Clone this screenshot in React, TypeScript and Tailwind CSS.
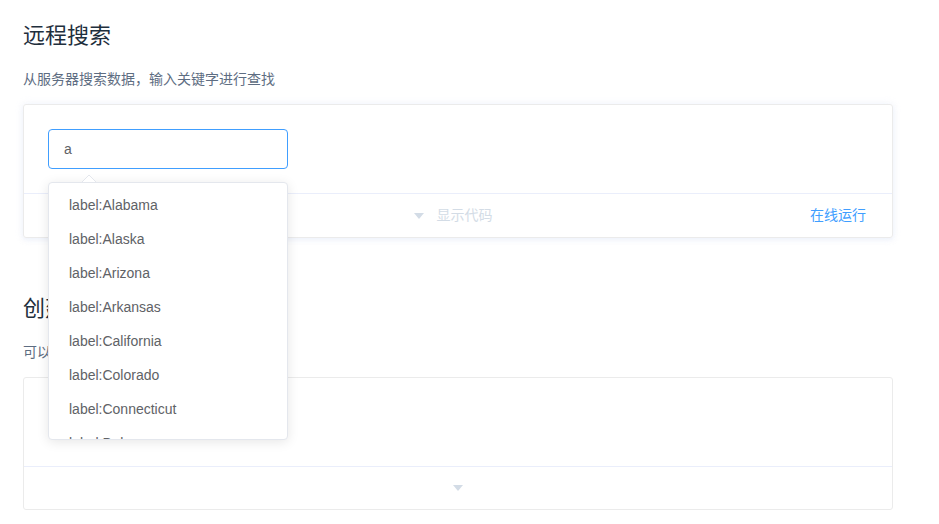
import React from "react";

const font = {
  fontFamily:
    '"Liberation Sans", Arial, "Noto Sans CJK SC", sans-serif',
};

const items = [
  "label:Alabama",
  "label:Alaska",
  "label:Arizona",
  "label:Arkansas",
  "label:California",
  "label:Colorado",
  "label:Connecticut",
  "label:Delaware",
  "label:Florida",
];

function Caret({ className }: { className?: string }) {
  return (
    <svg width="10" height="6" viewBox="0 0 10 6" className={className}>
      <polygon points="0,0 10,0 5,6" fill="#d3dce6" />
    </svg>
  );
}

export default function App() {
  return (
    <div className="min-h-screen bg-white" style={font}>
      <div className="w-[870px] ml-[23px] pt-[20px]">
        <h3 className="text-[22px] leading-[32px] text-[#1f2f3d] font-normal">远程搜索</h3>
        <p className="mt-[16px] text-[14px] leading-[22px] text-[#5e6d82]">
          从服务器搜索数据，输入关键字进行查找
        </p>
        <div className="mt-[14px] border border-[#ebebeb] rounded-[3px] shadow-[0_0_8px_0_rgba(232,237,250,0.6),0_2px_4px_0_rgba(232,237,250,0.5)]">
          <div className="p-6 h-[88px]">
            <div className="relative w-[240px]">
              <div className="h-10 border border-[#409eff] rounded-[4px] px-[15px] flex items-center text-[14px] text-[#606266]">
                a
              </div>
              <svg
                width="14"
                height="7"
                viewBox="0 0 14 7"
                className="absolute left-[34px] top-[46px] z-20"
              >
                <polygon points="0,7 7,0 14,7" fill="#ffffff" />
                <polyline points="0,7 7,0 14,7" fill="none" stroke="#e4e7ed" strokeWidth="1" />
              </svg>
              <div className="absolute left-0 top-[53px] z-10 w-[240px] h-[258px] bg-white border border-[#e4e7ed] rounded-[4px] shadow-[0_2px_12px_0_rgba(0,0,0,0.1)] overflow-hidden">
                <ul className="pt-[5px]">
                  {items.map((it) => (
                    <li
                      key={it}
                      className="px-5 leading-[34px] text-[14px] text-[#606266] whitespace-nowrap"
                    >
                      {it}
                    </li>
                  ))}
                </ul>
              </div>
            </div>
          </div>
          <div className="border-t border-[#eaeefb] h-[44px] grid grid-cols-[1fr_auto_1fr] items-center">
            <div />
            <div className="flex items-center mr-[10px]">
              <Caret />
              <span className="ml-[13px] text-[14px] text-[#d3dce6]">显示代码</span>
            </div>
            <div className="flex justify-end pr-[26px]">
              <span className="text-[14px] text-[#409eff]">在线运行</span>
            </div>
          </div>
        </div>

        <h3 className="mt-[55px] text-[22px] leading-[32px] text-[#1f2f3d] font-normal">创建条目</h3>
        <p className="mt-[16px] text-[14px] leading-[22px] text-[#5e6d82]">
          可以通过输入内容创建新的条目
        </p>
        <div className="mt-[14px] border border-[#ebebeb] rounded-[3px]">
          <div className="h-[88px]" />
          <div className="border-t border-[#eaeefb] h-[43px] flex items-center justify-center">
            <Caret />
          </div>
        </div>
      </div>
    </div>
  );
}
